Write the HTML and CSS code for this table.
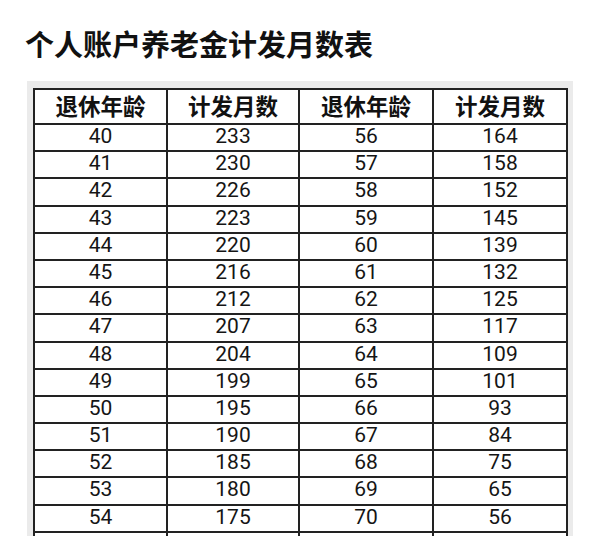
FILE: index.html
```html
<!DOCTYPE html>
<html lang="zh-CN">
<head>
<meta charset="utf-8">
<title>个人账户养老金计发月数表</title>
<link rel="stylesheet" href="styles.css">
</head>
<body>
<h1 class="title">个人账户养老金计发月数表</h1>
<div class="frame">
  <div class="grid">
    <div class="cell head">退休年龄</div><div class="cell head">计发月数</div><div class="cell head">退休年龄</div><div class="cell head">计发月数</div>
    <div class="cell">40</div><div class="cell">233</div><div class="cell">56</div><div class="cell">164</div>
    <div class="cell">41</div><div class="cell">230</div><div class="cell">57</div><div class="cell">158</div>
    <div class="cell">42</div><div class="cell">226</div><div class="cell">58</div><div class="cell">152</div>
    <div class="cell">43</div><div class="cell">223</div><div class="cell">59</div><div class="cell">145</div>
    <div class="cell">44</div><div class="cell">220</div><div class="cell">60</div><div class="cell">139</div>
    <div class="cell">45</div><div class="cell">216</div><div class="cell">61</div><div class="cell">132</div>
    <div class="cell">46</div><div class="cell">212</div><div class="cell">62</div><div class="cell">125</div>
    <div class="cell">47</div><div class="cell">207</div><div class="cell">63</div><div class="cell">117</div>
    <div class="cell">48</div><div class="cell">204</div><div class="cell">64</div><div class="cell">109</div>
    <div class="cell">49</div><div class="cell">199</div><div class="cell">65</div><div class="cell">101</div>
    <div class="cell">50</div><div class="cell">195</div><div class="cell">66</div><div class="cell">93</div>
    <div class="cell">51</div><div class="cell">190</div><div class="cell">67</div><div class="cell">84</div>
    <div class="cell">52</div><div class="cell">185</div><div class="cell">68</div><div class="cell">75</div>
    <div class="cell">53</div><div class="cell">180</div><div class="cell">69</div><div class="cell">65</div>
    <div class="cell">54</div><div class="cell">175</div><div class="cell">70</div><div class="cell">56</div>
    <div class="cell">55</div><div class="cell">170</div><div class="cell"></div><div class="cell"></div>
  </div>
</div>
</body>
</html>
```
FILE: styles.css
```css
html, body {
  margin: 0;
  padding: 0;
  background: #ffffff;
}
body {
  width: 600px;
  height: 536px;
  overflow: hidden;
  font-family: "Roboto", "Noto Sans CJK SC", sans-serif;
  color: #151515;
}
.title {
  margin: 0;
  padding: 27px 0 0 25px;
  height: 33px;
  line-height: 33px;
  font-family: "Noto Sans CJK SC", sans-serif;
  font-size: 29px;
  font-weight: 700;
  color: #111111;
}
.frame {
  margin: 21px 0 0 27px;
  width: 546px;
  padding: 7px 0 0 6px;
  box-sizing: border-box;
  background: #ebebeb;
}
.grid {
  display: grid;
  grid-template-columns: 133px 132px 134px 134px;
  grid-auto-rows: 27.2px;
  grid-template-rows: 35px;
  width: 535px;
  box-sizing: border-box;
  border-left: 2px solid #222222;
  border-top: 2px solid #222222;
  background: #ffffff;
}
.cell {
  box-sizing: border-box;
  padding-bottom: 2px;
  line-height: 23px;
  border-right: 2px solid #222222;
  border-bottom: 2px solid #222222;
  text-align: center;
  font-size: 21px;
}
.cell.head {
  padding-bottom: 0;
  line-height: 31px;
  font-family: "Noto Sans CJK SC", sans-serif;
  font-size: 22.5px;
  font-weight: 700;
  color: #111111;
}
```
